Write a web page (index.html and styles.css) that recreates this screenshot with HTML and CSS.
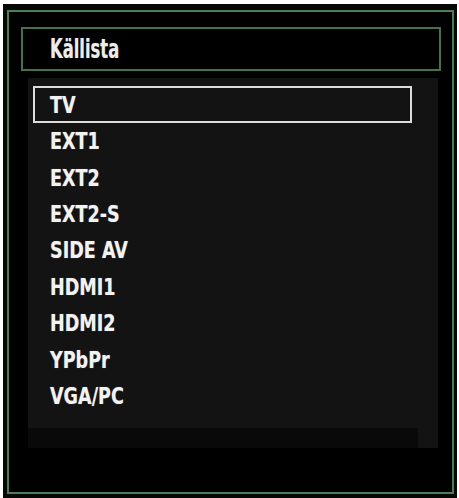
FILE: index.html
```html
<!DOCTYPE html>
<html lang="sv">
<head>
<meta charset="utf-8">
<title>Källista</title>
<link rel="stylesheet" href="styles.css">
</head>
<body>
<div class="frame">
  <div class="inner">
    <div class="header"><span class="title">Källista</span></div>
    <div class="panel">
      <ul class="list">
        <li class="item selected"><span class="label">TV</span></li>
        <li class="item"><span class="label">EXT1</span></li>
        <li class="item"><span class="label">EXT2</span></li>
        <li class="item"><span class="label">EXT2-S</span></li>
        <li class="item"><span class="label">SIDE AV</span></li>
        <li class="item"><span class="label">HDMI1</span></li>
        <li class="item"><span class="label">HDMI2</span></li>
        <li class="item"><span class="label">YPbPr</span></li>
        <li class="item"><span class="label">VGA/PC</span></li>
      </ul>
      <div class="panel-foot"></div>
    </div>
  </div>
</div>
</body>
</html>
```

FILE: styles.css
```css
html, body {
  margin: 0;
  padding: 0;
  background: #ffffff;
}
body {
  width: 459px;
  height: 498px;
  overflow: hidden;
  font-family: "DejaVu Sans Condensed", "DejaVu Sans", sans-serif;
}
.frame {
  box-sizing: border-box;
  margin: 4px 2px 0 3px;
  height: 494px;
  background: #050805;
  padding: 6px 3px 4px 4px;
}
.inner {
  box-sizing: border-box;
  height: 100%;
  background: #000;
  border: 2px solid #4b7d56;
  padding: 15px 11px 0 12px;
}
.header {
  box-sizing: border-box;
  height: 44px;
  border: 2px solid #47704f;
  padding-left: 27px;
  display: flex;
  align-items: center;
}
.title {
  color: #ececec;
  font-size: 26px;
  font-weight: bold;
  display: inline-block;
  transform: scaleX(0.7);
  transform-origin: left center;
  text-shadow: 0 0 1px rgba(255,255,255,0.4);
}
.panel {
  box-sizing: border-box;
  margin: 7px 0 0 7px;
  width: 410px;
  height: 370px;
  background: #131313;
  padding: 8px 0 0 5px;
  display: flex;
  flex-direction: column;
}
.list {
  list-style: none;
  margin: 0;
  padding: 0;
  flex: 1;
}
.item {
  box-sizing: border-box;
  width: 379px;
  height: 36.4px;
  padding-left: 15px;
  display: flex;
  align-items: center;
  border: 2px solid transparent;
}
.item.selected {
  height: 37px;
  border-color: #dcdcdc;
}
.label {
  color: #f2f2f2;
  font-size: 23px;
  font-weight: bold;
  display: inline-block;
  transform: scaleX(0.85);
  transform-origin: left center;
  text-shadow: 0 0 1px rgba(255,255,255,0.4);
}
.panel-foot {
  height: 20px;
  width: 390px;
  margin-left: -5px;
  background: #090909;
}
```
